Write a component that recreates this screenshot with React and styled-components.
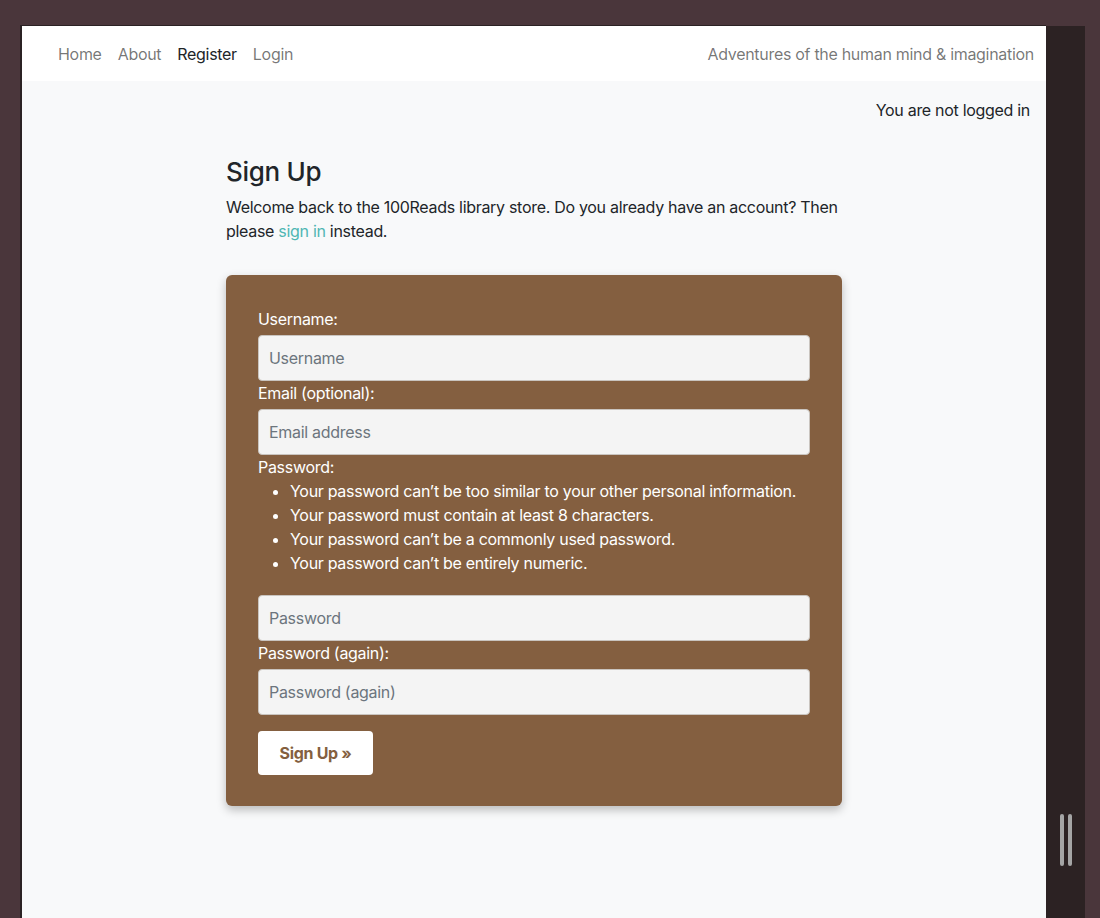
import React from 'react';
import styled, { createGlobalStyle } from 'styled-components';

const GlobalStyle = createGlobalStyle`
  html, body {
    margin: 0;
    padding: 0;
    background: #4a363b;
    font-family: Inter, "Liberation Sans", sans-serif;
    font-size: 16px;
    letter-spacing: -0.3px;
    color: #212529;
  }
`;

const Desktop = styled.div`
  display: flex;
  height: 918px;
  padding: 25px 0 0 20px;
  box-sizing: border-box;
  overflow: hidden;
`;

const Frame = styled.div`
  width: 1024px;
  border-left: 2px solid #2b2224;
  border-top: 1px solid #2b2224;
  background: #f8f9fa;
  display: flex;
  flex-direction: column;
`;

const SidePanel = styled.div`
  width: 39px;
  margin-top: 1px;
  background: #2c2223;
  display: flex;
  justify-content: center;
  align-items: flex-end;
  gap: 4px;
  padding-bottom: 52px;
  box-sizing: border-box;
`;

const Grip = styled.span`
  width: 4px;
  height: 52px;
  border-radius: 2px;
  background: #a5a5a5;
`;

const Navbar = styled.nav`
  height: 55px;
  background: #fff;
  display: flex;
  align-items: center;
  justify-content: space-between;
  padding: 0 12px 0 36px;
  box-sizing: border-box;
`;

const NavLinks = styled.div`
  display: flex;
  gap: 16px;
`;

const NavLink = styled.a`
  color: ${p => (p.active ? '#212529' : 'rgba(0, 0, 0, 0.55)')};
  text-decoration: none;
`;

const Tagline = styled.span`
  color: rgba(0, 0, 0, 0.55);
`;

const Status = styled.div`
  text-align: right;
  padding: 17px 16px 0 0;
  line-height: 24px;
`;

const Main = styled.main`
  width: 616px;
  margin: 0 auto;
  padding-top: 34px;
`;

const Title = styled.h3`
  margin: 0 0 8px;
  font-size: 26px;
  font-weight: 500;
  line-height: 31px;
`;

const Intro = styled.p`
  margin: 0 0 32px;
  line-height: 24px;
  a {
    color: #4fb6b3;
    text-decoration: none;
  }
`;

const Card = styled.form`
  background: #845f40;
  border-radius: 6px;
  padding: 32px 32px 31px;
  box-shadow: 0 4px 10px rgba(0, 0, 0, 0.25);
  color: #fff;
`;

const Label = styled.label`
  display: block;
  line-height: 24px;
  margin-bottom: ${p => (p.tight ? '0' : '4px')};
`;

const Input = styled.input`
  display: block;
  width: 100%;
  height: 46px;
  box-sizing: border-box;
  padding: 0 10px;
  border: 1px solid #c9c4bf;
  border-radius: 4px;
  background: #f4f4f4;
  font: inherit;
  letter-spacing: inherit;
  color: #212529;
  &::placeholder {
    color: #6c757d;
  }
`;

const Rules = styled.ul`
  margin: 0 0 20px;
  padding-left: 32px;
  li {
    line-height: 24px;
  }
`;

const Button = styled.button`
  margin-top: 16px;
  height: 44px;
  padding: 0 21.5px;
  border: none;
  border-radius: 4px;
  background: #fff;
  color: #845f40;
  font: inherit;
  letter-spacing: inherit;
  font-weight: 700;
`;

export default function App() {
  return (
    <>
      <GlobalStyle />
      <Desktop>
        <Frame>
          <Navbar>
            <NavLinks>
              <NavLink href="#">Home</NavLink>
              <NavLink href="#">About</NavLink>
              <NavLink href="#" active>Register</NavLink>
              <NavLink href="#">Login</NavLink>
            </NavLinks>
            <Tagline>Adventures of the human mind &amp; imagination</Tagline>
          </Navbar>
          <Status>You are not logged in</Status>
          <Main>
            <Title>Sign Up</Title>
            <Intro>
              Welcome back to the 100Reads library store. Do you already have an account? Then
              please <a href="#">sign in</a> instead.
            </Intro>
            <Card onSubmit={e => e.preventDefault()}>
              <Label htmlFor="username">Username:</Label>
              <Input id="username" placeholder="Username" />
              <Label htmlFor="email">Email (optional):</Label>
              <Input id="email" placeholder="Email address" />
              <Label htmlFor="password1" tight>Password:</Label>
              <Rules>
                <li>Your password can’t be too similar to your other personal information.</li>
                <li>Your password must contain at least 8 characters.</li>
                <li>Your password can’t be a commonly used password.</li>
                <li>Your password can’t be entirely numeric.</li>
              </Rules>
              <Input id="password1" type="password" placeholder="Password" />
              <Label htmlFor="password2">Password (again):</Label>
              <Input id="password2" type="password" placeholder="Password (again)" />
              <Button type="submit">Sign Up »</Button>
            </Card>
          </Main>
        </Frame>
        <SidePanel>
          <Grip />
          <Grip />
        </SidePanel>
      </Desktop>
    </>
  );
}
